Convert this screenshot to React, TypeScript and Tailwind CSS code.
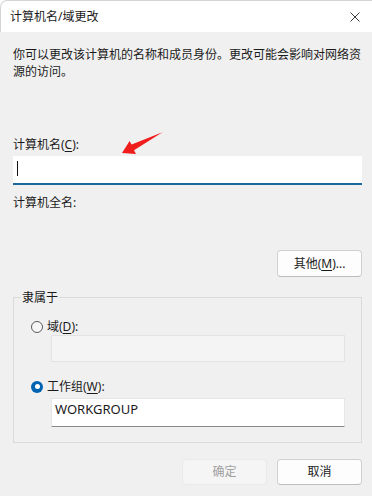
import React from "react";

function Radio({ checked }: { checked?: boolean }) {
  return checked ? (
    <span className="w-[12px] h-[12px] rounded-full bg-[#0063b1] flex items-center justify-center shrink-0">
      <span className="w-[5px] h-[5px] rounded-full bg-white" />
    </span>
  ) : (
    <span className="w-[12px] h-[12px] rounded-full border border-[#5b5b5b] bg-[#f7f7f7] shrink-0" />
  );
}

export default function App() {
  return (
    <div className="relative w-[372px] h-[496px] overflow-hidden bg-white font-['Noto_Sans','Noto_Sans_CJK_SC',sans-serif] text-[12px] text-[#1b1b1b]">
      {/* Title bar */}
      <div className="h-[32px] bg-white border-t border-l border-[#d4d4d4] rounded-tl-[7px] flex items-center justify-between pl-[9px] pr-[6px]">
        <span className="leading-[17px]">计算机名/域更改</span>
        <svg width="20" height="20" viewBox="0 0 20 20" className="mr-[1px]">
          <path d="M5.5 5.5 L14.5 14.5 M14.5 5.5 L5.5 14.5" stroke="#3a3a3a" strokeWidth="1" fill="none" />
        </svg>
      </div>

      {/* Body */}
      <div className="bg-[#f0f0f0] h-[464px] pl-[13px] pr-[10px] flex flex-col">
        <p className="pt-[14px] leading-[17px]">
          你可以更改该计算机的名称和成员身份。更改可能会影响对网络资
          <br />
          源的访问。
        </p>

        <div className="mt-[56px] leading-[17px]">
          计算机名(<u className="underline-offset-2">C</u>):
        </div>
        <div className="mt-[3px] h-[29px] bg-white border-b-2 border-[#1b6a9b] flex items-start pl-[4px] pt-[5px]">
          <span className="w-px h-[15px] bg-[#111]" />
        </div>

        <div className="mt-[9px] leading-[17px]">计算机全名:</div>

        <div className="mt-[39px] flex justify-end">
          <button className="w-[85px] h-[27px] rounded-[4px] border border-[#d0d0d0] border-b-[#bcbcbc] bg-[#fdfdfd] flex items-center justify-center leading-[17px]">
            其他(<u className="underline-offset-2">M</u>)...
          </button>
        </div>

        {/* Group box */}
        <div className="relative mt-[20px] border border-[#dadada] pt-[20px] pl-[17px] pr-[16px] pb-[15px]">
          <span className="absolute left-[7px] top-[-9px] px-[1px] bg-[#f0f0f0] leading-[17px]">隶属于</span>

          <div className="flex items-center gap-[4px] h-[17px]">
            <Radio />
            <span className="leading-[17px]">
              域(<u className="underline-offset-2">D</u>):
            </span>
          </div>
          <div className="ml-[20px] h-[27px] bg-[#f4f4f4] border border-[#e3e3e3]" />

          <div className="mt-[16px] flex items-center gap-[4px] h-[17px]">
            <Radio checked />
            <span className="leading-[17px]">
              工作组(<u className="underline-offset-2">W</u>):
            </span>
          </div>
          <div className="ml-[20px] mt-[3px] h-[29px] bg-white border border-[#e6e6e6] border-b-[#8a8a8a] pl-[3px] pt-[2px]">
            <span className="text-[13px] leading-[17px] font-['Noto_Sans',sans-serif]">WORKGROUP</span>
          </div>
        </div>

        {/* Buttons */}
        <div className="mt-[16px] flex justify-end gap-[10px]">
          <button className="w-[85px] h-[26px] rounded-[4px] border border-[#e9e9e9] bg-[#f5f5f5] text-[#a0a0a0] flex items-center justify-center">
            确定
          </button>
          <button className="w-[85px] h-[26px] rounded-[4px] border border-[#d0d0d0] border-b-[#bdbdbd] bg-[#fdfdfd] flex items-center justify-center">
            取消
          </button>
        </div>
      </div>

      {/* Red annotation arrow */}
      <svg className="absolute left-0 top-0 pointer-events-none" width="372" height="496" viewBox="0 0 372 496">
        <polygon
          points="122,153 129.6,141 131.6,144.6 162.5,132.3 134,150.2 136,154"
          fill="#f01d1d"
        />
      </svg>
    </div>
  );
}
